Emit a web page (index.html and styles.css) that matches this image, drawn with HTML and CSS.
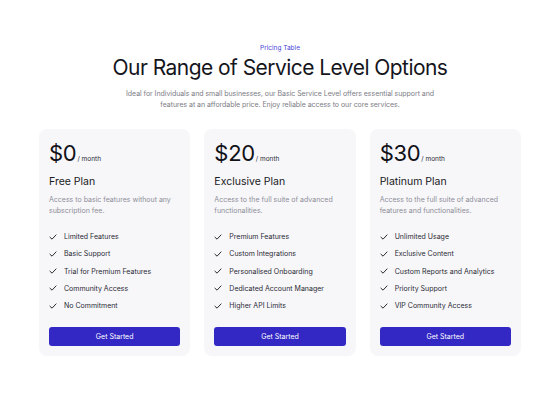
FILE: index.html
```html
<!DOCTYPE html>
<html>
<head>
<meta charset="utf-8">
<link rel="stylesheet" href="styles.css">
</head>
<body>
<main class="page">
  <header class="intro">
    <p class="eyebrow">Pricing Table</p>
    <h1 class="title">Our Range of Service Level Options</h1>
    <p class="lead">Ideal for Individuals and small businesses, our Basic Service Level offers essential support and features at an affordable price. Enjoy reliable access to our core services.</p>
  </header>
  <section class="plans">
    <article class="card">
      <div class="price"><span class="amount">$0</span><span class="per">/ month</span></div>
      <h2 class="name">Free Plan</h2>
      <p class="desc">Access to basic features without any subscription fee.</p>
      <ul class="features">
        <li><svg class="check" viewBox="0 0 10 10"><path d="M1.2 5.3 L3.8 7.7 L8.8 2.4"/></svg>Limited Features</li>
        <li><svg class="check" viewBox="0 0 10 10"><path d="M1.2 5.3 L3.8 7.7 L8.8 2.4"/></svg>Basic Support</li>
        <li><svg class="check" viewBox="0 0 10 10"><path d="M1.2 5.3 L3.8 7.7 L8.8 2.4"/></svg>Trial for Premium Features</li>
        <li><svg class="check" viewBox="0 0 10 10"><path d="M1.2 5.3 L3.8 7.7 L8.8 2.4"/></svg>Community Access</li>
        <li><svg class="check" viewBox="0 0 10 10"><path d="M1.2 5.3 L3.8 7.7 L8.8 2.4"/></svg>No Commitment</li>
      </ul>
      <button class="cta">Get Started</button>
    </article>
    <article class="card">
      <div class="price"><span class="amount">$20</span><span class="per">/ month</span></div>
      <h2 class="name">Exclusive Plan</h2>
      <p class="desc">Access to the full suite of advanced functionalities.</p>
      <ul class="features">
        <li><svg class="check" viewBox="0 0 10 10"><path d="M1.2 5.3 L3.8 7.7 L8.8 2.4"/></svg>Premium Features</li>
        <li><svg class="check" viewBox="0 0 10 10"><path d="M1.2 5.3 L3.8 7.7 L8.8 2.4"/></svg>Custom Integrations</li>
        <li><svg class="check" viewBox="0 0 10 10"><path d="M1.2 5.3 L3.8 7.7 L8.8 2.4"/></svg>Personalised Onboarding</li>
        <li><svg class="check" viewBox="0 0 10 10"><path d="M1.2 5.3 L3.8 7.7 L8.8 2.4"/></svg>Dedicated Account Manager</li>
        <li><svg class="check" viewBox="0 0 10 10"><path d="M1.2 5.3 L3.8 7.7 L8.8 2.4"/></svg>Higher API Limits</li>
      </ul>
      <button class="cta">Get Started</button>
    </article>
    <article class="card">
      <div class="price"><span class="amount">$30</span><span class="per">/ month</span></div>
      <h2 class="name">Platinum Plan</h2>
      <p class="desc">Access to the full suite of advanced features and functionalities.</p>
      <ul class="features">
        <li><svg class="check" viewBox="0 0 10 10"><path d="M1.2 5.3 L3.8 7.7 L8.8 2.4"/></svg>Unlimited Usage</li>
        <li><svg class="check" viewBox="0 0 10 10"><path d="M1.2 5.3 L3.8 7.7 L8.8 2.4"/></svg>Exclusive Content</li>
        <li><svg class="check" viewBox="0 0 10 10"><path d="M1.2 5.3 L3.8 7.7 L8.8 2.4"/></svg>Custom Reports and Analytics</li>
        <li><svg class="check" viewBox="0 0 10 10"><path d="M1.2 5.3 L3.8 7.7 L8.8 2.4"/></svg>Priority Support</li>
        <li><svg class="check" viewBox="0 0 10 10"><path d="M1.2 5.3 L3.8 7.7 L8.8 2.4"/></svg>VIP Community Access</li>
      </ul>
      <button class="cta">Get Started</button>
    </article>
  </section>
</main>
</body>
</html>
```
FILE: styles.css
```css
* { box-sizing: border-box; }
html, body { margin: 0; padding: 0; background: #ffffff; }
body {
  font-family: Inter, "Noto Sans", sans-serif;
  color: #16161d;
  width: 560px;
  height: 400px;
  overflow: hidden;
}
.page {
  padding: 43px 39px 0;
}
.intro {
  display: flex;
  flex-direction: column;
  align-items: center;
  text-align: center;
}
.eyebrow {
  margin: 0;
  font-size: 6.5px;
  line-height: 10px;
  color: #4a3fd6;
}
.title {
  margin: 1px 0 0;
  font-size: 21px;
  line-height: 28px;
  font-weight: 400;
  letter-spacing: -0.55px;
  color: #15151c;
}
.lead {
  margin: 6px 0 0;
  width: 330px;
  font-size: 7px;
  line-height: 11px;
  letter-spacing: -0.05px;
  color: #7c7c85;
}
.plans {
  margin-top: 19px;
  display: grid;
  grid-template-columns: repeat(3, 1fr);
  gap: 14px;
}
.card {
  background: #f7f7fa;
  border-radius: 8px;
  padding: 11px 10px 10px;
  display: flex;
  flex-direction: column;
}
.price {
  display: flex;
  align-items: baseline;
}
.amount {
  font-size: 22px;
  line-height: 26px;
  font-weight: 400;
  letter-spacing: -0.3px;
  color: #111118;
}
.per {
  font-size: 6.5px;
  color: #2a2a33;
  margin-left: 1px;
}
.name {
  margin: 9px 0 0;
  font-size: 10.5px;
  line-height: 14px;
  font-weight: 400;
  color: #1a1a22;
}
.desc {
  margin: 5px 0 0;
  font-size: 7px;
  line-height: 11px;
  color: #8e8e98;
  min-height: 22px;
}
.features {
  list-style: none;
  margin: 15px 0 0;
  padding: 0;
  display: flex;
  flex-direction: column;
  gap: 6.25px;
}
.features li {
  display: flex;
  align-items: center;
  font-size: 7px;
  line-height: 11px;
  color: #2a2a33;
}
.check {
  width: 8px;
  height: 8px;
  margin-right: 7px;
  fill: none;
  stroke: #222228;
  stroke-width: 1.2;
  stroke-linecap: round;
  stroke-linejoin: round;
}
.cta {
  margin-top: 16px;
  height: 19px;
  border: 0;
  border-radius: 3px;
  background: #3328c4;
  color: #ffffff;
  font-family: inherit;
  font-size: 7px;
  cursor: pointer;
}
```
